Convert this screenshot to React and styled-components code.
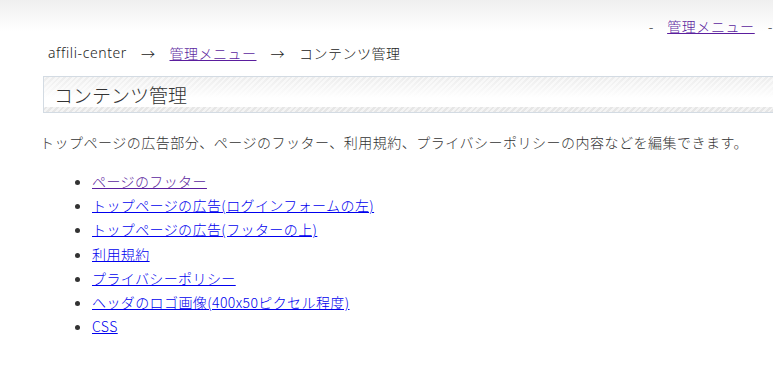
import React from 'react'
import styled, { createGlobalStyle } from 'styled-components'

const GlobalStyle = createGlobalStyle`
  html, body {
    margin: 0;
    padding: 0;
    background: #fff;
    overflow: hidden;
  }
  body {
    font-family: "Noto Sans CJK JP", "Noto Sans", sans-serif;
    font-size: 14px;
    font-weight: 300;
    color: #333;
  }
`

const Page = styled.div`
  width: 773px;
`

const Header = styled.header`
  height: 40px;
  background: linear-gradient(to bottom, #efefef 0%, #fafafa 55%, #fff 80%);
  display: flex;
  justify-content: flex-end;
  align-items: flex-end;
  padding-right: 0;
`

const TopNav = styled.nav`
  display: flex;
  gap: 13px;
  line-height: 20px;
  padding-bottom: 4px;
  letter-spacing: 0.6px;
`

const Link = styled.a`
  color: ${({ visited }) => (visited ? '#5b1e9e' : '#0000ee')};
  text-decoration: underline;
  cursor: pointer;
`

const Main = styled.main`
  padding: 0 0 0 40px;
`

const Breadcrumb = styled.div`
  display: flex;
  gap: 14px;
  padding: 3px 0 0 8px;
  line-height: 20px;
  letter-spacing: 0.5px;
  color: #222;
`

const Crumb = styled.span`
  letter-spacing: ${({ latin }) => (latin ? '0.6px' : '0.5px')};
  font-family: ${({ latin }) => (latin ? '"Noto Sans", sans-serif' : 'inherit')};
`

const TitleBox = styled.h1`
  margin: 13px 0 0 3px;
  height: 35px;
  border: 1px solid #d3dbe3;
  border-right: none;
  padding: 0 0 0 10px;
  font-size: 19px;
  font-weight: 300;
  line-height: 35px;
  color: #333;
  background:
    repeating-linear-gradient(135deg, rgba(255,255,255,0.55) 0 2px, rgba(255,255,255,0) 2px 4px),
    linear-gradient(to bottom, #ececec 0%, #f7f7f7 35%, #fff 60%, #fff 86%, #e6e6e6 87%, #e6e6e6 100%);
`

const Lead = styled.p`
  margin: 19px 0 0 0;
  line-height: 20px;
  letter-spacing: 0.5px;
`

const MenuList = styled.ul`
  margin: 17px 0 0 0;
  padding: 0 0 0 52px;
  list-style: disc;
`

const MenuItem = styled.li`
  line-height: 24.2px;
  letter-spacing: 0.4px;
  color: #333;
`

const items = [
  { label: 'ページのフッター', visited: true },
  { label: 'トップページの広告(ログインフォームの左)' },
  { label: 'トップページの広告(フッターの上)' },
  { label: '利用規約' },
  { label: 'プライバシーポリシー' },
  { label: 'ヘッダのロゴ画像(400x50ピクセル程度)' },
  { label: 'CSS' },
]

export default function App() {
  return (
    <>
      <GlobalStyle />
      <Page>
        <Header>
          <TopNav>
            <span>-</span>
            <Link visited>管理メニュー</Link>
            <span>-</span>
          </TopNav>
        </Header>
        <Main>
          <Breadcrumb>
            <Crumb latin>affili-center</Crumb>
            <span>→</span>
            <Link visited>管理メニュー</Link>
            <span>→</span>
            <Crumb>コンテンツ管理</Crumb>
          </Breadcrumb>
          <TitleBox>コンテンツ管理</TitleBox>
          <Lead>
            トップページの広告部分、ページのフッター、利用規約、プライバシーポリシーの内容などを編集できます。
          </Lead>
          <MenuList>
            {items.map((item) => (
              <MenuItem key={item.label}>
                <Link visited={item.visited}>{item.label}</Link>
              </MenuItem>
            ))}
          </MenuList>
        </Main>
      </Page>
    </>
  )
}
